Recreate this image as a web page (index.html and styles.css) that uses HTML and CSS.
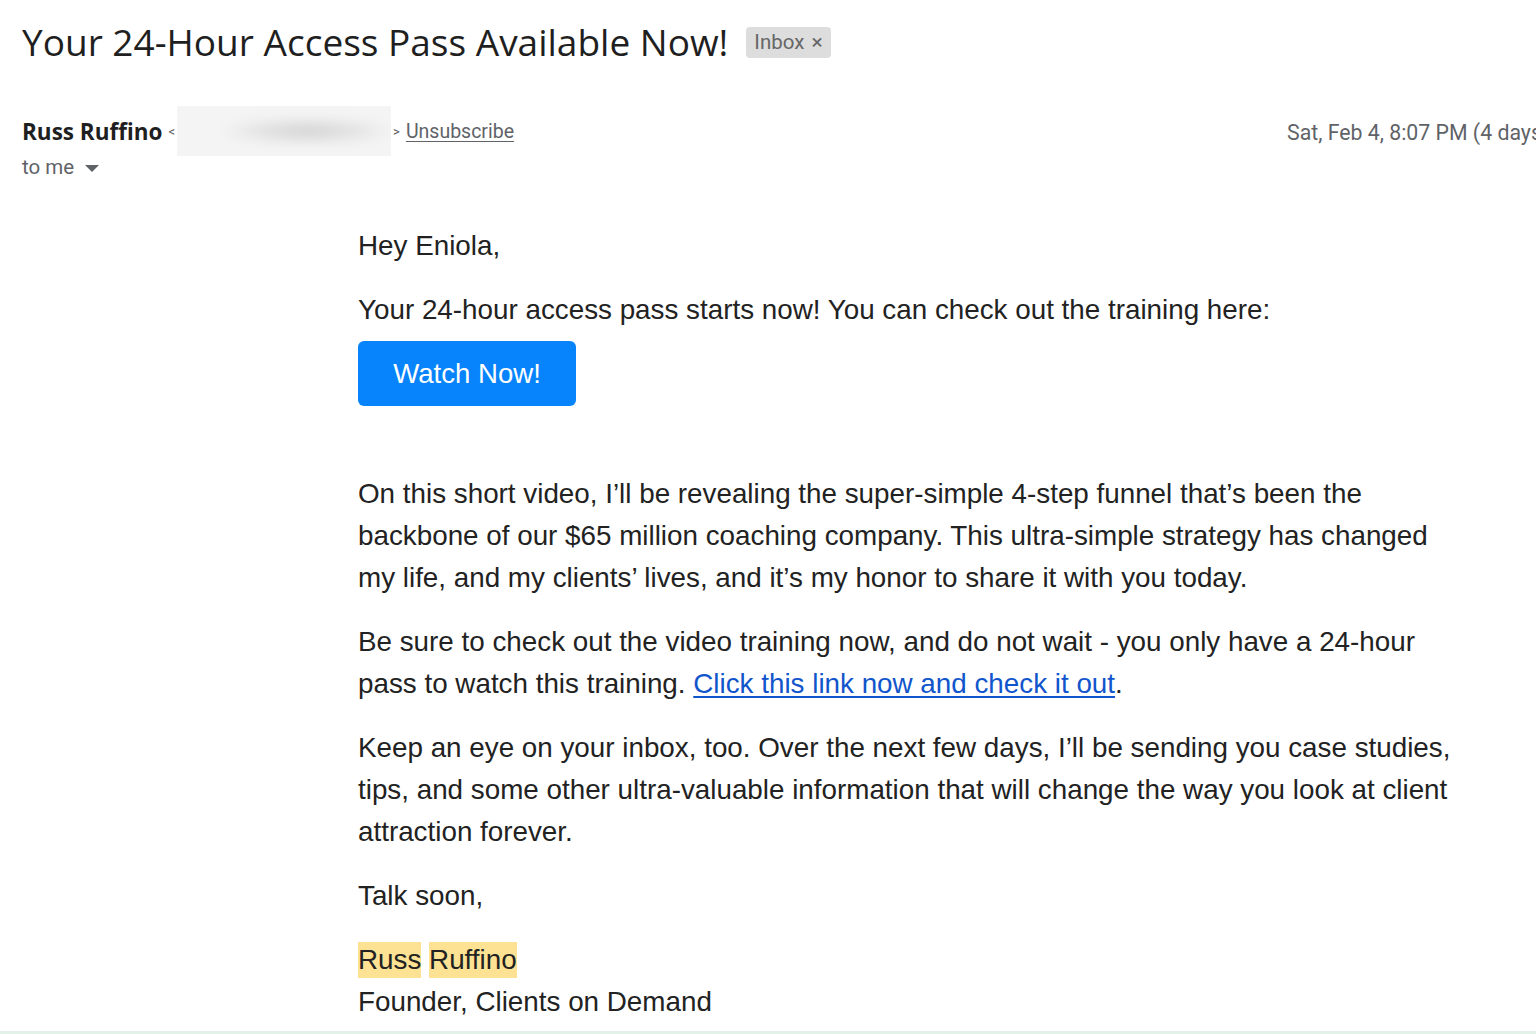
FILE: index.html
```html
<!DOCTYPE html>
<html>
<head>
<meta charset="utf-8">
<link rel="stylesheet" href="styles.css">
</head>
<body>
<div class="page">
  <div class="subject-row">
    <h1 class="subject">Your 24-Hour Access Pass Available Now!</h1>
    <span class="label">Inbox <span class="label-x">×</span></span>
  </div>
  <div class="header">
    <div class="sender">
      <span class="name">Russ Ruffino</span>
      <span class="angle">&lt;</span><span class="blur-wrap"><span class="blur"></span></span><span class="angle">&gt;</span>
      <a class="unsub" href="#">Unsubscribe</a>
    </div>
    <div class="date-cell"><span class="date">Sat, Feb 4, 8:07 PM (4 days ago)</span></div>
    <div class="tome">to me <span class="caret"></span></div>
  </div>
  <div class="body">
    <p>Hey Eniola,</p>
    <p>Your 24-hour access pass starts now! You can check out the training here:</p>
    <a class="btn" href="#">Watch Now!</a>
    <p class="after-btn">On this short video, I’ll be revealing the super-simple 4-step funnel that’s been the backbone of our $65 million coaching company. This ultra-simple strategy has changed my life, and my clients’ lives, and it’s my honor to share it with you today.</p>
    <p>Be sure to check out the video training now, and do not wait - you only have a 24-hour pass to watch this training. <a class="link" href="#">Click this link now and check it out</a>.</p>
    <p>Keep an eye on your inbox, too. Over the next few days, I’ll be sending you case studies, tips, and some other ultra-valuable information that will change the way you look at client attraction forever.</p>
    <p>Talk soon,</p>
    <p><span class="hl">Russ</span> <span class="hl">Ruffino</span><br>Founder, Clients on Demand</p>
  </div>
</div>
<div class="bottom-line"></div>
</body>
</html>
```

FILE: styles.css
```css
html, body {
  margin: 0;
  padding: 0;
  background: #fff;
  overflow: hidden;
}
body {
  width: 1536px;
  height: 1034px;
  position: relative;
  font-family: "Liberation Sans", Arial, sans-serif;
  color: #222;
}
.page {
  padding-left: 22px;
}
.subject-row {
  display: flex;
  align-items: center;
  height: 84px;
}
.subject {
  margin: 0;
  font-family: "Open Sans", sans-serif;
  font-weight: 400;
  font-size: 37px;
  color: #1f1f1f;
  line-height: 1;
  padding-bottom: 2px;
}
.label {
  margin-left: 18px;
  background: #dddddd;
  color: #666;
  border-radius: 4px;
  font-family: "Roboto", sans-serif;
  font-size: 20.5px;
  padding: 3px 8px 4px 8px;
  line-height: 24px;
}
.label-x {
  font-size: 21px;
  margin-left: 2px;
}
.header {
  display: grid;
  grid-template-columns: 1265px 400px;
  margin-top: 20px;
}
.sender {
  display: flex;
  align-items: center;
  height: 58px;
  margin-top: -2px;
}
.name {
  font-family: "Open Sans", sans-serif;
  font-weight: 700;
  font-size: 22.5px;
  color: #1f1f1f;
}
.angle {
  font-family: "Roboto", sans-serif;
  font-size: 13px;
  color: #555;
  margin-left: 6px;
}
.blur-wrap {
  display: inline-block;
  width: 214px;
  height: 50px;
  overflow: hidden;
  margin: 0 2px;
  position: relative;
}
.blur {
  position: absolute;
  left: -10px;
  right: -10px;
  top: -10px;
  bottom: -10px;
  background: radial-gradient(ellipse 90px 14px at 60% 50%, #d0d0d0, #e4e4e4 60%, #f4f4f4 100%);
  filter: blur(6px);
}
.blur-wrap + .angle { margin-left: 0; }
.unsub {
  margin-left: 6px;
  font-family: "Roboto", sans-serif;
  font-size: 19.5px;
  color: #5f6368;
  text-decoration: underline;
  text-underline-offset: 3px;
}
.date-cell {
  padding-top: 16px;
}
.date {
  font-family: "Roboto", sans-serif;
  font-size: 21.3px;
  color: #5f6368;
  white-space: nowrap;
}
.tome {
  font-family: "Roboto", sans-serif;
  font-size: 20.5px;
  color: #5f6368;
  display: flex;
  align-items: center;
  margin-top: -5px;
}
.caret {
  display: inline-block;
  width: 0;
  height: 0;
  border-left: 7px solid transparent;
  border-right: 7px solid transparent;
  border-top: 7px solid #5f6368;
  margin-left: 11px;
  margin-top: 2px;
}
.body {
  margin-left: 336px;
  margin-top: 46px;
  width: 1100px;
  font-size: 27.8px;
  line-height: 42px;
  color: #222;
}
.body p {
  margin: 0 0 22px 0;
}
.btn {
  display: inline-block;
  background: #0784fc;
  color: #fff;
  text-decoration: none;
  width: 218px;
  height: 65px;
  line-height: 65px;
  text-align: center;
  border-radius: 6px;
  font-size: 27.6px;
  margin-top: -12px;
}
.body p.after-btn {
  margin-top: 67px;
}
.link {
  color: #1155cc;
  text-decoration: underline;
  text-underline-offset: 3px;
}
.hl {
  background: #fde293;
  padding: 2px 0 3px;
}
.bottom-line {
  position: absolute;
  left: 0;
  right: 0;
  bottom: 0;
  height: 3px;
  background: #e3f2e8;
}
```
